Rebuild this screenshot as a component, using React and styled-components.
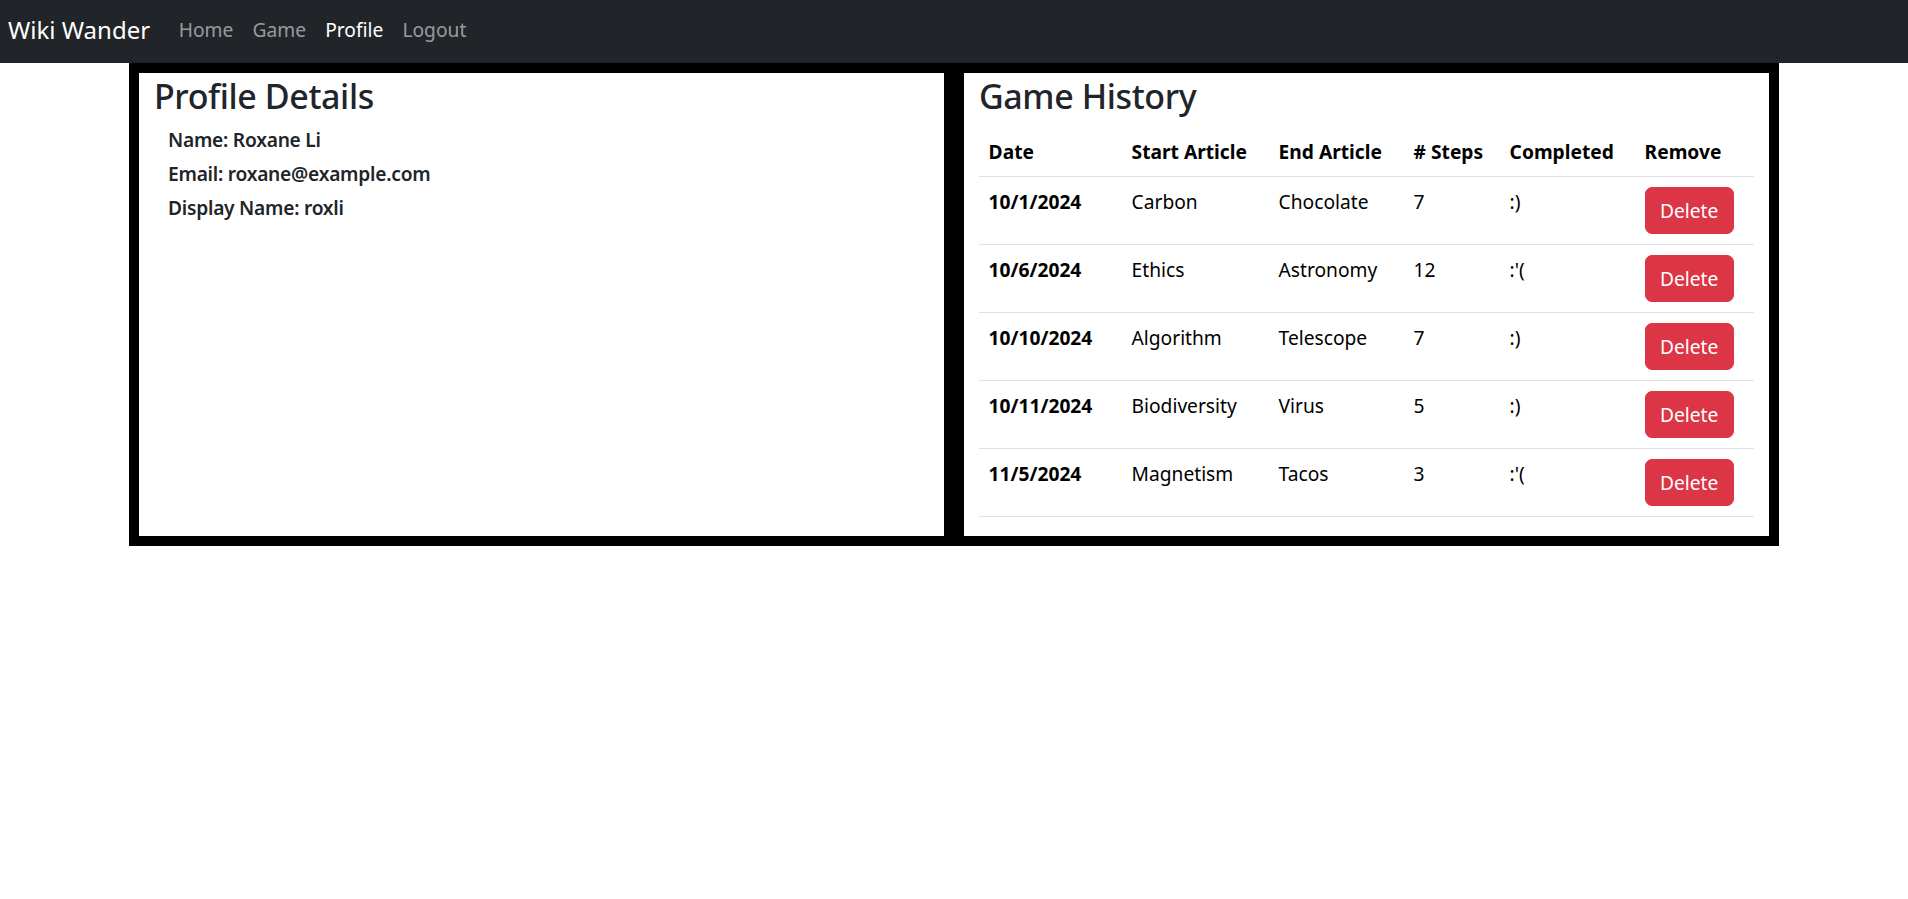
import styled, { createGlobalStyle } from "styled-components";

const GlobalStyle = createGlobalStyle`
  body {
    margin: 0;
    font-family: "Noto Sans", "Open Sans", sans-serif;
    font-size: 19.2px;
    color: #212529;
    background: #fff;
  }
`;

const Navbar = styled.nav`
  box-sizing: border-box;
  height: 63px;
  background: #212529;
  display: flex;
  align-items: center;
  padding: 0 8px 4px;
`;

const Brand = styled.a`
  color: #fff;
  font-size: 24px;
  line-height: 36px;
  margin-right: 19px;
  text-decoration: none;
`;

const NavLink = styled.a`
  color: ${(p) => (p.$active ? "#fff" : "rgba(255, 255, 255, 0.55)")};
  font-size: 19.2px;
  line-height: 29px;
  padding: 0 9.6px;
  text-decoration: none;
`;

const Board = styled.main`
  width: 1650px;
  margin: 0 auto;
  display: grid;
  grid-template-columns: 1fr 1fr;
`;

const Panel = styled.section`
  border: 10px solid #000;
  padding: 1px 15px 19px;
  min-width: 0;
`;

const Title = styled.h2`
  margin: 1px 0 ${(p) => p.$gap}px;
  font-size: 34px;
  line-height: 42px;
  font-weight: 500;
  letter-spacing: -0.4px;
  color: #212529;
`;

const DetailList = styled.div`
  display: flex;
  flex-direction: column;
  gap: 5px;
  padding-left: 14px;
`;

const Detail = styled.p`
  margin: 0;
  font-weight: 600;
  line-height: 29px;
  letter-spacing: -0.25px;
`;

const Table = styled.table`
  width: 100%;
  table-layout: fixed;
  border-collapse: collapse;
  color: #000;
`;

const Th = styled.th`
  text-align: left;
  font-weight: 700;
  line-height: 29px;
  padding: 8px 9.6px 10px;
  border-bottom: 1px solid #dee2e6;
  white-space: nowrap;
`;

const Td = styled.td`
  vertical-align: top;
  line-height: 29px;
  padding: 10px 9.6px;
  border-bottom: 1px solid #dee2e6;
  font-weight: ${(p) => (p.$bold ? 700 : 400)};
  white-space: nowrap;
`;

const DeleteButton = styled.button`
  box-sizing: border-box;
  width: 89px;
  height: 47px;
  padding: 0;
  border: 1px solid #dc3545;
  border-radius: 7px;
  background: #dc3545;
  color: #fff;
  font-family: inherit;
  font-size: 19.2px;
  cursor: pointer;
`;

const columns = [
  ["Date", 143],
  ["Start Article", 147],
  ["End Article", 135],
  ["# Steps", 96],
  ["Completed", 135],
  ["Remove", 119],
];

const games = [
  { date: "10/1/2024", start: "Carbon", end: "Chocolate", steps: 7, done: true },
  { date: "10/6/2024", start: "Ethics", end: "Astronomy", steps: 12, done: false },
  { date: "10/10/2024", start: "Algorithm", end: "Telescope", steps: 7, done: true },
  { date: "10/11/2024", start: "Biodiversity", end: "Virus", steps: 5, done: true },
  { date: "11/5/2024", start: "Magnetism", end: "Tacos", steps: 3, done: false },
];

export default function App() {
  return (
    <>
      <GlobalStyle />
      <Navbar>
        <Brand href="#">Wiki Wander</Brand>
        <NavLink href="#">Home</NavLink>
        <NavLink href="#">Game</NavLink>
        <NavLink href="#" $active>
          Profile
        </NavLink>
        <NavLink href="#">Logout</NavLink>
      </Navbar>
      <Board>
        <Panel>
          <Title $gap={8}>Profile Details</Title>
          <DetailList>
            <Detail>Name: Roxane Li</Detail>
            <Detail>Email: roxane@example.com</Detail>
            <Detail>Display Name: roxli</Detail>
          </DetailList>
        </Panel>
        <Panel>
          <Title $gap={12}>Game History</Title>
          <Table>
            <colgroup>
              {columns.map(([name, w]) => (
                <col key={name} style={{ width: w }} />
              ))}
            </colgroup>
            <thead>
              <tr>
                {columns.map(([name]) => (
                  <Th key={name}>{name}</Th>
                ))}
              </tr>
            </thead>
            <tbody>
              {games.map((g, i) => (
                <tr key={i}>
                  <Td $bold>{g.date}</Td>
                  <Td>{g.start}</Td>
                  <Td>{g.end}</Td>
                  <Td>{g.steps}</Td>
                  <Td>{g.done ? ":)" : ":'("}</Td>
                  <Td>
                    <DeleteButton>Delete</DeleteButton>
                  </Td>
                </tr>
              ))}
            </tbody>
          </Table>
        </Panel>
      </Board>
    </>
  );
}
